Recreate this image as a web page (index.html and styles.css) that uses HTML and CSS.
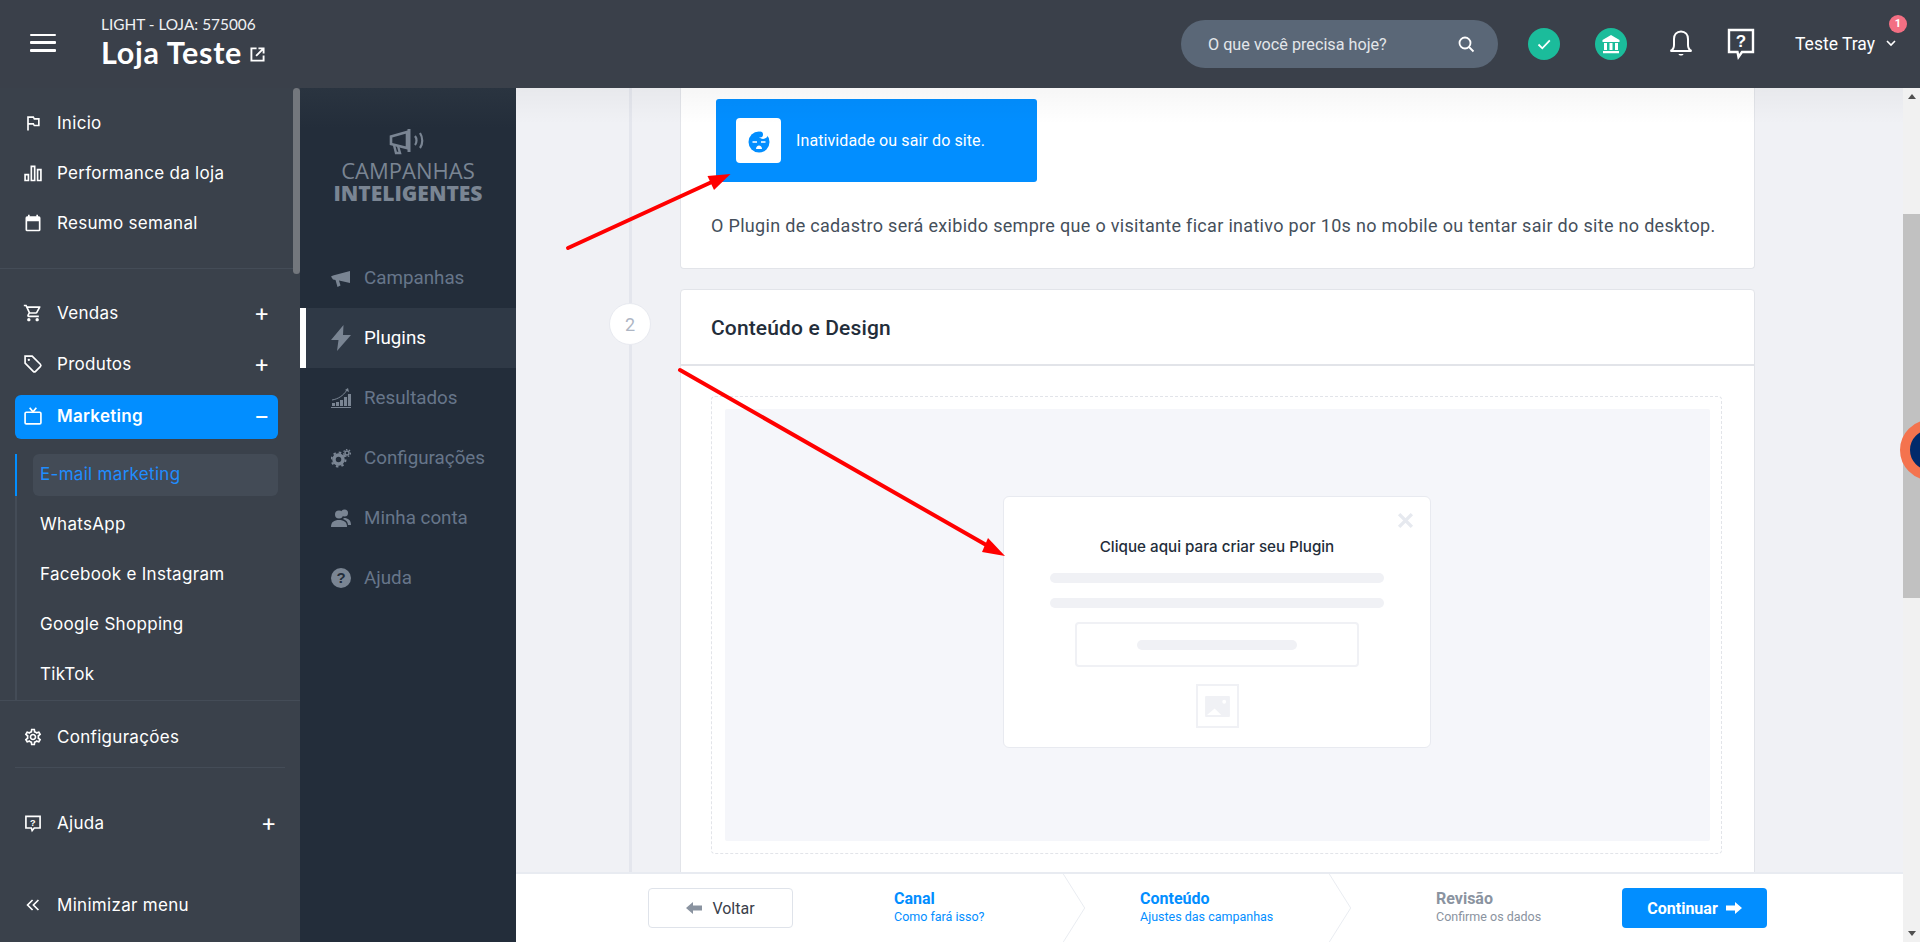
FILE: index.html
```html
<!DOCTYPE html>
<html lang="pt-BR">
<head>
<meta charset="utf-8">
<title>Loja Teste - Campanhas Inteligentes</title>
<link rel="stylesheet" href="styles.css">
</head>
<body>
<div class="app">
  <header class="topbar">
    <button class="burger" aria-label="Menu"><span></span><span></span><span></span></button>
    <div class="store">
      <div class="store-plan">LIGHT - LOJA: 575006</div>
      <div class="store-name">Loja Teste
        <svg class="ext" viewBox="0 0 16 16"><path d="M7 1.500H1.500v13h13V9" fill="none" stroke="#fff" stroke-width="2"/><path d="M9 1.500h5.500V7M14 2L6.500 9.500" fill="none" stroke="#fff" stroke-width="2"/></svg>
      </div>
    </div>
    <div class="search"><span>O que você precisa hoje?</span>
      <svg viewBox="0 0 18 18" class="search-ico"><circle cx="8" cy="8" r="5.500" fill="none" stroke="#fff" stroke-width="1.800"/><path d="M12 12l4.500 4.500" stroke="#fff" stroke-width="1.800"/></svg>
    </div>
    <div class="circle-ico ci1"><svg viewBox="0 0 32 32"><path d="M10.500 16.500l3.800 3.800 7.500-8" fill="none" stroke="#fff" stroke-width="1.800"/></svg></div>
    <div class="circle-ico ci2"><svg viewBox="0 0 32 32"><path d="M16 7l8.500 5v2h-17v-2z" fill="#fff"/><path d="M9 15h3v7H9zM14.500 15h3v7h-3zM20 15h3v7h-3zM8 23h16v2.200H8z" fill="#fff"/></svg></div>
    <svg class="bell" viewBox="0 0 26 30"><path d="M13 2.500c-4.500 0-7 3.500-7 7.500v6c0 3-1.500 5-3.500 6h21c-2-1-3.500-3-3.500-6v-6c0-4-2.500-7.500-7-7.500z" fill="none" stroke="#fff" stroke-width="2"/><path d="M10.500 25c.5 2 4.500 2 5 0z" fill="#fff"/></svg>
    <svg class="helpico" viewBox="0 0 28 32"><path d="M2 2h24v22H15l-3.500 5-1-5H2z" fill="none" stroke="#fff" stroke-width="2.400"/><text x="14" y="19" text-anchor="middle" class="svg-q">?</text></svg>
    <div class="user">Teste Tray
      <svg viewBox="0 0 10 8" class="chev"><path d="M1 2l4 4 4-4" fill="none" stroke="#fff" stroke-width="1.600"/></svg>
      <span class="badge">1</span>
    </div>
  </header>

  <div class="body">
    <nav class="side">
      <div class="side-thumb"></div>
      <div class="side-group first">
        <a class="item">
          <svg class="ic" viewBox="0 0 24 24"><path fill="#fff" d="M14 6l-1-2H5v17h2v-7h5l1 2h7V6h-6zm4 8h-4l-1-2H7V6h5l1 2h5v6z"/></svg>Inicio</a>
        <a class="item">
          <svg class="ic" viewBox="0 0 24 24"><path d="M2.500 14h4v7h-4zM10 4h4v17h-4zM17.500 8h4v13h-4z" fill="none" stroke="#fff" stroke-width="2"/></svg>Performance da loja</a>
        <a class="item">
          <svg class="ic" viewBox="0 0 24 24"><path fill="#fff" d="M19 4h-1V2h-2v2H8V2H6v2H5a2 2 0 0 0-2 2v14a2 2 0 0 0 2 2h14a2 2 0 0 0 2-2V6a2 2 0 0 0-2-2zm0 16H5V10h14z"/></svg>Resumo semanal</a>
      </div>
      <div class="side-group second">
        <a class="item tall">
          <svg class="ic" viewBox="0 0 24 24"><path fill="#fff" d="M15.550 13c.75 0 1.410-.41 1.750-1.030l3.580-6.490A.996.996 0 0 0 20.010 4H5.210l-.94-2H1v2h2l3.600 7.590-1.350 2.440C4.520 15.370 5.480 17 7 17h12v-2H7l1.100-2h7.450zM6.160 6h12.150l-2.760 5H8.530L6.160 6zM7 18c-1.100 0-1.990.9-1.990 2S5.900 22 7 22s2-.9 2-2-.9-2-2-2zm10 0c-1.100 0-1.990.9-1.990 2s.89 2 1.990 2 2-.9 2-2-.9-2-2-2z"/></svg>Vendas<span class="sign">+</span></a>
        <a class="item tall">
          <svg class="ic" viewBox="0 0 24 24"><path d="M11 2.500H2.500V11l9.800 9.800c.8.8 2 .8 2.800 0l5.700-5.700c.8-.8.8-2 0-2.800z" fill="none" stroke="#fff" stroke-width="2"/><circle cx="7" cy="7" r="1.400" fill="#fff"/></svg>Produtos<span class="sign">+</span></a>
        <a class="item mk">
          <svg class="ic" viewBox="0 0 24 24"><rect x="2.500" y="7.500" width="19" height="14" rx="1.500" fill="none" stroke="#fff" stroke-width="2"/><path d="M8 2l4 5 4-5" fill="none" stroke="#fff" stroke-width="2"/></svg>Marketing<span class="sign">−</span></a>
        <div class="sub">
          <a class="sub-item active">E-mail marketing</a>
          <a class="sub-item">WhatsApp</a>
          <a class="sub-item">Facebook e Instagram</a>
          <a class="sub-item">Google Shopping</a>
          <a class="sub-item">TikTok</a>
        </div>
      </div>
      <div class="side-config">
        <a class="item">
          <svg class="ic" viewBox="0 0 24 24"><path fill="#fff" d="M19.430 12.980c.04-.32.07-.64.07-.98 0-.34-.03-.66-.07-.98l2.110-1.650c.19-.15.24-.42.12-.64l-2-3.460c-.09-.16-.26-.25-.44-.25-.06 0-.12.01-.17.03l-2.490 1c-.52-.4-1.080-.73-1.690-.98l-.38-2.650C14.460 2.180 14.250 2 14 2h-4c-.25 0-.46.18-.49.42l-.38 2.650c-.61.25-1.170.59-1.690.98l-2.490-1c-.06-.02-.12-.03-.18-.03-.17 0-.34.09-.43.25l-2 3.460c-.13.22-.07.49.12.64l2.110 1.650c-.04.32-.07.65-.07.98 0 .33.03.66.07.98l-2.110 1.650c-.19.15-.24.42-.12.64l2 3.460c.09.16.26.25.44.25.06 0 .12-.01.17-.03l2.490-1c.52.4 1.080.73 1.690.98l.38 2.650c.03.24.24.42.49.42h4c.25 0 .46-.18.49-.42l.38-2.650c.61-.25 1.170-.59 1.690-.98l2.490 1c.06.02.12.03.18.03.17 0 .34-.09.43-.25l2-3.460c.12-.22.07-.49-.12-.64l-2.110-1.650zm-1.980-1.710c.04.31.05.52.05.73 0 .21-.02.43-.05.73l-.14 1.130.89.7 1.080.84-.7 1.210-1.270-.51-1.040-.42-.9.68c-.43.32-.84.56-1.250.73l-1.060.43-.16 1.130-.2 1.350h-1.400l-.19-1.350-.16-1.130-1.060-.43c-.43-.18-.83-.41-1.230-.71l-.91-.7-1.060.43-1.270.51-.7-1.210 1.080-.84.89-.7-.14-1.130c-.03-.31-.05-.54-.05-.74s.02-.43.05-.73l.14-1.130-.89-.7-1.080-.84.7-1.210 1.270.51 1.040.42.9-.68c.43-.32.84-.56 1.250-.73l1.060-.43.16-1.130.2-1.350h1.390l.19 1.350.16 1.130 1.060.43c.43.18.83.41 1.230.71l.91.7 1.060-.43 1.270-.51.7 1.210-1.070.85-.89.7.14 1.130zM12 8c-2.210 0-4 1.790-4 4s1.790 4 4 4 4-1.790 4-4-1.790-4-4-4zm0 6c-1.100 0-2-.9-2-2s.9-2 2-2 2 .9 2 2-.9 2-2 2z"/></svg>Configurações</a>
      </div>
      <div class="side-help">
        <a class="item">
          <svg class="ic" viewBox="0 0 24 24"><path d="M3.500 4h17v14h-7l-2.500 3-1-3H3.500z" fill="none" stroke="#fff" stroke-width="2"/><text x="12" y="15" text-anchor="middle" class="svg-q small">?</text></svg>Ajuda<span class="sign far">+</span></a>
      </div>
      <div class="side-min">
        <a class="item">
          <svg class="ic" viewBox="0 0 24 24"><path d="M11.500 6l-6 6 6 6M18.500 6l-6 6 6 6" fill="none" stroke="#fff" stroke-width="2"/></svg>Minimizar menu</a>
      </div>
    </nav>

    <aside class="camp">
      <div class="camp-logo">
        <svg class="camp-mega" viewBox="0 0 40 28"><path d="M3 9.500l16-4.500V21L3 17z" fill="none" stroke="#7a8593" stroke-width="2.600"/><path d="M21 2v23" stroke="#7a8593" stroke-width="3"/><path d="M6 18l2 8h4l-2-7" fill="none" stroke="#7a8593" stroke-width="2.400"/><path d="M27 9c2 2.500 2 6.500 0 9M32 6c3 4.500 3 11 0 15" fill="none" stroke="#7a8593" stroke-width="2.200"/></svg>
        <div class="camp-word">CAMPANHAS<br>INTELIGENTES</div>
      </div>
      <a class="camp-item">
        <svg viewBox="0 0 20 20" class="cic"><path d="M0 8.500l2-1L19 3v12L8 12.500l1.500 5-3 1.500L4.500 12 2 11.500z" fill="#7a8593"/></svg>Campanhas</a>
      <a class="camp-item on">
        <svg viewBox="0 0 20 26" class="cic"><path d="M12.500 0L0 15h7.500L6 26 20 10h-8z" fill="#7a8593"/></svg>Plugins</a>
      <a class="camp-item">
        <svg viewBox="0 0 20 20" class="cic"><path d="M0 20h20v-1H0zM1 15h3v3H1zM5 14h3v4H5zM9 12h3v6H9zM13 9h3v9h-3zM17 6h3v12h-3z" fill="#7a8593"/><path d="M1 12c6-1 11-4 15-10" fill="none" stroke="#7a8593"/><path d="M14 2l3-2 1 4z" fill="#7a8593"/></svg>Resultados</a>
      <a class="camp-item">
        <svg viewBox="0 0 20 20" class="cic"><circle cx="7.500" cy="11.500" r="4.500" fill="none" stroke="#7a8593" stroke-width="3.500"/><circle cx="7.500" cy="11.500" r="7" fill="none" stroke="#7a8593" stroke-width="2" stroke-dasharray="2.500 3"/><circle cx="16" cy="5" r="2" fill="none" stroke="#7a8593" stroke-width="1.500"/><circle cx="16" cy="5" r="3.500" fill="none" stroke="#7a8593" stroke-width="1.200" stroke-dasharray="1.500 1.500"/></svg>Configurações</a>
      <a class="camp-item">
        <svg viewBox="0 0 20 20" class="cic"><circle cx="8" cy="6.500" r="4" fill="#7a8593"/><path d="M0 19c0-5 3-7 8-7s8 2 8 7z" fill="#7a8593"/><circle cx="13.500" cy="5" r="3.500" fill="#7a8593"/><path d="M13 10c4 0 7 2 7 7h-3c0-3-2-5-5-6z" fill="#7a8593"/></svg>Minha conta</a>
      <a class="camp-item">
        <svg viewBox="0 0 20 20" class="cic"><circle cx="10" cy="10" r="10" fill="#7a8593"/><text x="10" y="15" text-anchor="middle" class="svg-q dark">?</text></svg>Ajuda</a>
    </aside>

    <main class="main">
      <div class="col">
        <div class="scroll">
          <div class="rail">
            <div class="rail-line r1"></div>
            <div class="rail-num">2</div>
            <div class="rail-line r2"></div>
          </div>
          <div class="cards">
            <section class="card card-a">
              <div class="trigger">
                <div class="trigger-box">
                  <svg viewBox="0 0 24 24" class="moon"><circle cx="12" cy="13" r="10.500" fill="#028eff"/><circle cx="16" cy="5" r="5" fill="#fff"/><circle cx="13" cy="5.500" r="3" fill="#028eff"/><path d="M5.500 13h4.500M14 13h4.500" stroke="#fff" stroke-width="1.300"/><path d="M9 20c0-2.200 1.500-3.500 3-3.500s3 1.300 3 3.500z" fill="#fff"/></svg>
                </div>
                <span>Inatividade ou sair do site.</span>
              </div>
              <p class="desc">O Plugin de cadastro será exibido sempre que o visitante ficar inativo por 10s no mobile ou tentar sair do site no desktop.</p>
            </section>
            <section class="card card-b">
              <h2 class="card-title">Conteúdo e Design</h2>
              <div class="dash">
                <div class="stage">
                  <div class="popup">
                    <svg class="x" viewBox="0 0 16 16"><path d="M2 2l12 12M14 2L2 14" stroke="#e6e9ef" stroke-width="3.200"/></svg>
                    <div class="popup-title">Clique aqui para criar seu Plugin</div>
                    <div class="ghost full"></div>
                    <div class="ghost full g2"></div>
                    <div class="ghost-btn"><div class="ghost mid"></div></div>
                    <div class="ghost-img">
                      <svg viewBox="0 0 26 22"><path d="M1 0h24a1 1 0 0 1 1 1v20a1 1 0 0 1-1 1H1a1 1 0 0 1-1-1V1a1 1 0 0 1 1-1z" fill="#f0f1f5"/><path d="M2 20l8-7 7 7z" fill="#fff"/><circle cx="20" cy="6" r="2" fill="#fff"/></svg>
                    </div>
                  </div>
                </div>
              </div>
            </section>
          </div>
          <div class="scroll-shade"></div>
        </div>
        <footer class="foot">
          <button class="btn-back"><svg viewBox="0 0 16 14"><path d="M0 7l7-6v3.500h9v5H7V13z" fill="#8a93a0"/></svg>Voltar</button>
          <div class="step s1"><b>Canal</b><small>Como fará isso?</small></div>
          <svg class="chevron c1" viewBox="0 0 24 70"><path d="M1 0l22 35L1 70" fill="none" stroke="#e8ebf1"/></svg>
          <div class="step s2"><b>Conteúdo</b><small>Ajustes das campanhas</small></div>
          <svg class="chevron c2" viewBox="0 0 24 70"><path d="M1 0l22 35L1 70" fill="none" stroke="#e8ebf1"/></svg>
          <div class="step s3 off"><b>Revisão</b><small>Confirme os dados</small></div>
          <button class="btn-go">Continuar<svg viewBox="0 0 16 14"><path d="M16 7L9 1v3.500H0v5h9V13z" fill="#fff"/></svg></button>
        </footer>
      </div>
      <div class="bar">
        <span class="bar-up"></span>
        <div class="bar-track"><div class="bar-thumb"></div></div>
        <span class="bar-down"></span>
      </div>
    </main>
  </div>

  <div class="chat-bubble"></div>
  <svg class="arrows" viewBox="0 0 1920 942">
    <path d="M568 248L714 181" stroke="#f00" stroke-width="4" stroke-linecap="round"/>
    <path d="M730.500 174L707.500 176 714 190z" fill="#f00"/>
    <path d="M680 370L988 546" stroke="#f00" stroke-width="4" stroke-linecap="round"/>
    <path d="M1005 556L988 538 982 552z" fill="#f00"/>
  </svg>
</div>
</body>
</html>
```
FILE: styles.css
```css
* { box-sizing: border-box; }
html, body { margin: 0; height: 100%; overflow: hidden; }
body { font-family: Roboto, "Liberation Sans", sans-serif; }
a { display: block; }
button { font-family: inherit; cursor: pointer; }
.app { width: 1920px; height: 942px; position: relative; display: flex; flex-direction: column; overflow: hidden; }

/* top bar */
.topbar { height: 88px; flex: none; background: #3a404a; display: flex; align-items: center; color: #fff; }
.burger { width: 26px; height: 18px; margin: 0 0 3px 30px; padding: 0; border: 0; background: none; display: flex; flex-direction: column; justify-content: space-between; }
.burger span { display: block; height: 2.500px; background: #fff; border-radius: 1px; }
.store { margin-left: 45px; margin-bottom: 4px; }
.store-plan { font-family: Lato, sans-serif; font-size: 15.400px; line-height: 19px; color: #f0f1f3; white-space: nowrap; }
.store-name { font-family: Lato, sans-serif; font-weight: 700; font-size: 30.500px; letter-spacing: .7px; line-height: 36px; display: flex; align-items: center; gap: 8px; white-space: nowrap; }
.ext { width: 15px; height: 15px; margin-top: 6px; }
.search { width: 317px; height: 48px; margin-left: auto; border-radius: 24px; background: #5a6777; display: flex; align-items: center; justify-content: space-between; padding: 0 23px 0 27px; font-size: 16.200px; color: #e3e6ea; }
.search-ico { width: 18px; height: 18px; }
.circle-ico { width: 32px; height: 32px; border-radius: 50%; background: #1bbc9b; }
.circle-ico svg { display: block; width: 32px; height: 32px; }
.ci1 { margin-left: 30px; }
.ci2 { margin-left: 35px; }
.bell { width: 26px; height: 30px; margin-left: 41px; }
.helpico { width: 28px; height: 34px; margin-left: 33px; }
.svg-q { font: 700 17px "Liberation Sans", sans-serif; fill: #fff; }
.svg-q.small { font-size: 11px; }
.svg-q.dark { font-size: 15px; fill: #232d3a; }
.user { width: 125px; margin-left: 40px; position: relative; display: flex; align-items: center; gap: 11px; font-size: 17.500px; white-space: nowrap; }
.chev { width: 10px; height: 8px; margin-bottom: 2px; }
.badge { position: absolute; right: 13px; top: -19px; width: 18px; height: 18px; border-radius: 50%; background: #f36f83; font: 700 11px/18px Roboto, sans-serif; text-align: center; color: #fff; }

/* layout */
.body { flex: 1; display: flex; min-height: 0; }

/* main sidebar */
.side { width: 300px; flex: none; background: #3a414b; color: #fff; position: relative; display: flex; flex-direction: column; font-family: Inter, sans-serif; font-size: 17px; letter-spacing: .3px; }
.side-thumb { position: absolute; right: 0; top: 0; width: 7px; height: 186px; border-radius: 4px; background: #73777d; }
.item { display: flex; align-items: center; height: 50px; padding-left: 23px; position: relative; }
.ic { width: 20px; height: 20px; margin-right: 14px; flex: none; }
.side-group.first { padding: 10px 0 20px; border-bottom: 1px solid #444c57; }
.side-group.second { padding-top: 18px; }
.item.tall { height: 51px; }
.sign { position: absolute; right: 30px; font-size: 24px; font-weight: 400; line-height: 1; }
.sign.far { right: 8px; }
.item.mk { margin: 6px 22px 0 15px; height: 44px; padding: 0 0 2px 8px; border-radius: 6px; background: #028eff; font-weight: 600; }
.item.mk .ic { margin-right: 14px; }
.item.mk .sign { right: 8px; }
.sub { margin: 15px 0 0 15px; border-left: 2px solid #444c57; position: relative; }
.sub-item { height: 50px; display: flex; align-items: center; padding: 0 0 2px 23px; margin-right: 22px; }
.sub-item.active { height: 42px; margin: 0 22px 4px 16px; padding: 0 0 2px 7px; background: #434b56; border-radius: 6px; color: #1f8dff; }
.sub-item.active::before { content: ""; position: absolute; left: -2px; top: 0; width: 2px; height: 42px; background: #028eff; }
.side-config { border-top: 1px solid #444c57; padding: 11px 0 5px; }
.side-config .item { height: 50px; }
.side-help { margin: 0 15px; border-top: 1px solid #444c57; padding-top: 30px; }
.side-help .item { padding-left: 8px; }
.side-min { margin-top: 32px; }

/* campaigns sidebar */
.camp { width: 216px; flex: none; background: #232d3a; color: #67768a; }
.camp-logo { height: 160px; padding-top: 39px; text-align: center; background: linear-gradient(#2a3440, #232d3a 40px); }
.camp-mega { display: block; width: 40px; height: 28px; margin: 0 auto 4px; }
.camp-word { font-family: "Open Sans", sans-serif; font-size: 21px; font-weight: 800; line-height: 23px; color: #7a8593; white-space: nowrap; }
.camp-word::first-line { font-size: 22px; font-weight: 400; }
.camp-item { height: 60px; display: flex; align-items: center; padding: 0 0 1px 31px; font-size: 18.800px; }
.cic { width: 20px; height: 26px; margin-right: 13px; flex: none; }
.camp-item.on { background: #2f3946; border-left: 6px solid #fff; padding-left: 25px; color: #fff; }

/* main */
.main { flex: 1; display: flex; min-width: 0; background: #f0f1f5; }
.col { flex: 1; min-width: 0; display: flex; flex-direction: column; }
.scroll { flex: 1; min-height: 0; overflow: hidden; display: flex; position: relative; }
.scroll-shade { position: absolute; left: 0; right: 0; top: 0; height: 36px; background: linear-gradient(rgba(0,0,0,.035), rgba(0,0,0,0)); pointer-events: none; }
.rail { width: 164px; flex: none; padding: 0 28px 0 92px; display: flex; flex-direction: column; align-items: center; }
.rail-line { width: 3px; background: #e4e6ed; }
.r1 { height: 215px; }
.r2 { flex: 1; }
.rail-num { width: 42px; height: 42px; flex: none; border-radius: 50%; background: #fff; border: 1px solid #e8eaf0; color: #aeb6c4; display: flex; align-items: center; justify-content: center; font-size: 18px; }
.cards { width: 1075px; flex: none; }
.card { background: #fff; border: 1px solid #e2e4e9; }
.card-a { height: 181px; border-top: 0; border-radius: 0 0 4px 4px; padding: 11px 30px 0; }
.trigger { width: 321px; height: 83px; margin-left: 5px; background: #028eff; border-radius: 3px; display: flex; align-items: center; padding-left: 20px; color: #fff; font-size: 16px; letter-spacing: .1px; gap: 15px; white-space: nowrap; }
.trigger-box { width: 45px; height: 45px; background: #fff; border-radius: 4px; display: flex; align-items: center; justify-content: center; }
.moon { width: 24px; height: 24px; }
.desc { margin: 34px 0 0; font-size: 18px; line-height: 20px; color: #454f5b; letter-spacing: .31px; white-space: nowrap; }
.card-b { margin-top: 20px; height: 700px; border-radius: 4px 4px 0 0; }
.card-title { margin: 0; height: 76px; border-bottom: 2px solid #e2e4e9; padding: 0 30px; font-size: 21px; letter-spacing: .14px; font-weight: 500; line-height: 76px; color: #232d3a; }
.dash { margin: 30px 32px 0 30px; height: 458px; border: 1px dashed #e2e4e9; border-radius: 4px; padding: 12px 11px 12px 13px; }
.stage { height: 432px; background: #f5f6fa; border-radius: 2px; padding: 87px 0 0 278px; }
.popup { width: 428px; height: 252px; background: #fff; border: 1px solid #e8eaf0; border-radius: 6px; position: relative; padding: 39px 46px 0; display: flex; flex-direction: column; align-items: center; }
.x { position: absolute; right: 16px; top: 15px; width: 17px; height: 17px; }
.popup-title { font-size: 15.200px; line-height: 22px; font-weight: 500; color: #232d3a; font-family: Inter, sans-serif; white-space: nowrap; }
.ghost { height: 10px; border-radius: 5px; background: #f0f1f5; }
.ghost.full { width: 334px; margin-top: 15px; flex: none; }
.ghost.g2 { margin-top: 15px; }
.ghost-btn { width: 284px; height: 45px; margin-top: 14px; flex: none; border: 2px solid #f0f1f5; border-radius: 4px; display: flex; align-items: center; justify-content: center; }
.ghost.mid { width: 160px; }
.ghost-img { width: 43px; height: 44px; margin-top: 17px; flex: none; border: 2px solid #f0f1f5; display: flex; align-items: center; justify-content: center; }
.ghost-img svg { width: 25px; height: 21px; }

/* footer */
.foot { height: 70px; flex: none; background: #fff; border-top: 2px solid #e8ebf1; display: flex; align-items: center; position: relative; z-index: 1; }
.foot button { height: 40px; border-radius: 4px; font-size: 16px; display: flex; align-items: center; justify-content: center; }
.btn-back { width: 145px; margin-left: 132px; background: #fff; border: 1px solid #dfe3ea; color: #3a404a; gap: 10px; }
.btn-back svg, .btn-go svg { width: 16px; height: 14px; }
.step { display: flex; flex-direction: column; color: #028eff; padding-bottom: 2px; }
.step b { font-size: 16px; line-height: 20px; font-weight: 700; }
.step small { font-size: 12.500px; line-height: 16px; }
.step.off { color: #8a93a0; }
.s1 { width: 168px; margin-left: 101px; }
.chevron { width: 24px; height: 68px; flex: none; }
.s2 { width: 188px; margin-left: 54px; }
.s3 { width: 186px; margin-left: 84px; }
.btn-go { width: 145px; background: #028eff; border: 0; color: #fff; font-weight: 700; gap: 8px; }

/* page scrollbar */
.bar { width: 17px; flex: none; background: #f1f1f1; display: flex; flex-direction: column; position: relative; }
.bar-track { flex: 1; padding-top: 109px; }
.bar-thumb { height: 384px; background: #c1c1c1; }
.bar-up, .bar-down { height: 17px; flex: none; display: flex; align-items: center; justify-content: center; }
.bar-up::before { content: ""; border: 4px solid transparent; border-top: 0; border-bottom: 5px solid #505050; }
.bar-down::before { content: ""; border: 4px solid transparent; border-bottom: 0; border-top: 5px solid #505050; }

/* overlays */
.chat-bubble { position: absolute; left: 1900px; top: 420px; width: 60px; height: 60px; border-radius: 50%; background: #012a6b; border: 10px solid #f4734e; }
.arrows { position: absolute; inset: 0; width: 1920px; height: 942px; pointer-events: none; }
```
